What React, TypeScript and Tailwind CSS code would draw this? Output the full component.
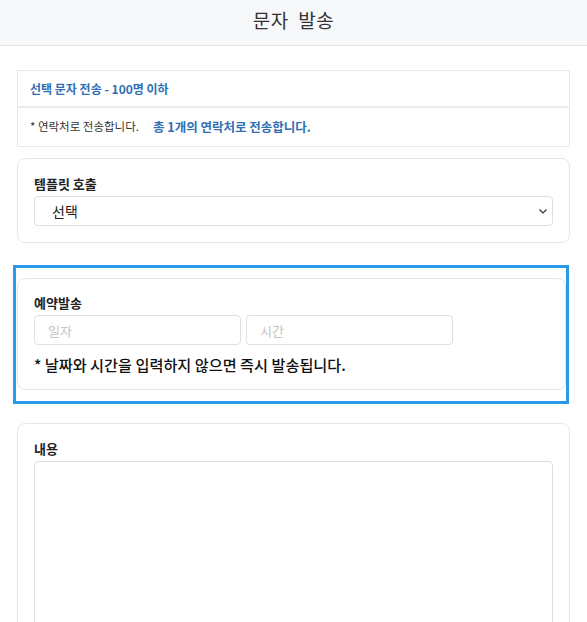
const FONT = { fontFamily: '"Noto Sans CJK KR", "Noto Sans", sans-serif' };

function Label({ children }: { children: React.ReactNode }) {
  return (
    <p className="text-[13px] font-bold leading-[18px] text-[#222] mb-[3px]">
      {children}
    </p>
  );
}

export default function App() {
  return (
    <div style={FONT} className="min-h-[622px] bg-white pb-10">
      {/* Header */}
      <div className="h-[46px] bg-[#f7f8fa] border-b border-[#e3e5e8] flex items-center justify-center">
        <h1 className="text-[19px] leading-none tracking-[0.5px] text-[#333] -mt-[7px]">
          문자&nbsp; 발송
        </h1>
      </div>

      {/* Recipient summary */}
      <div className="mx-[17px] mt-[24px] border border-[#e8e8e8]">
        <div className="h-[37px] flex items-center px-[12px] border-b-2 border-[#ebebeb]">
          <span className="text-[12px] font-bold text-[#2f6fb3]">
            선택 문자 전송 - 100명 이하
          </span>
        </div>
        <div className="h-[38px] flex items-center px-[12px] gap-[14px]">
          <span className="text-[11.5px] text-[#333]">* 연락처로 전송합니다.</span>
          <span className="text-[12.5px] font-bold text-[#2f6fb3]">
            총 1개의 연락처로 전송합니다.
          </span>
        </div>
      </div>

      {/* Template */}
      <div className="mx-[17px] mt-[11px] border border-[#e6e6e6] rounded-[8px] pt-[16px] pb-[16px] px-[16px]">
        <Label>템플릿 호출</Label>
        <div className="h-[30px] border border-[#dedede] rounded-[4px] flex items-center justify-between pl-[17px] pr-[4px]">
          <span className="text-[14px] text-[#222]">선택</span>
          <svg width="10" height="10" viewBox="0 0 10 10" fill="none">
            <path d="M1.5 3.5 5 7l3.5-3.5" stroke="#333" strokeWidth="1.2" />
          </svg>
        </div>
      </div>

      {/* Reservation (highlighted) */}
      <div className="ml-[13px] w-[556px] mt-[22px] border-[3px] border-[#2b9ae6] pt-[10px] pb-[11px] pl-[1px] pr-0">
        <div className="border border-[#e6e6e6] rounded-[8px] pt-[15px] pb-[14px] px-[16px]">
          <Label>예약발송</Label>
          <div className="flex gap-[5px]">
            <input
              placeholder="일자"
              className="w-[207px] h-[30px] border border-[#e0e0e0] rounded-[4px] px-[13px] text-[13px] placeholder:text-[#c4c4c4] outline-none"
            />
            <input
              placeholder="시간"
              className="w-[207px] h-[30px] border border-[#e0e0e0] rounded-[4px] px-[13px] text-[13px] placeholder:text-[#c4c4c4] outline-none"
            />
          </div>
          <p className="mt-[8px] text-[15.2px] font-medium leading-[22px] text-[#111]">
            * 날짜와 시간을 입력하지 않으면 즉시 발송됩니다.
          </p>
        </div>
      </div>

      {/* Content */}
      <div className="mx-[17px] mt-[19px] border border-[#e6e6e6] rounded-[8px] pt-[16px] pb-[16px] px-[16px]">
        <Label>내용</Label>
        <textarea className="w-full h-[240px] border border-[#dedede] rounded-[4px] resize-none outline-none block" />
      </div>
    </div>
  );
}
